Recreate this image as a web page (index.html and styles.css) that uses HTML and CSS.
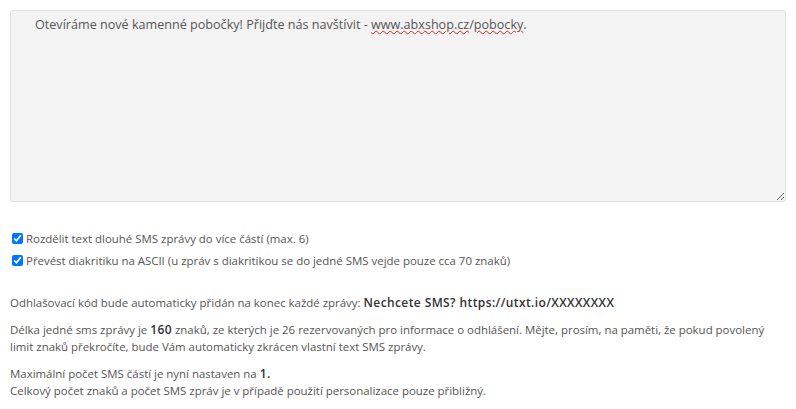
FILE: index.html
```html
<!DOCTYPE html>
<html lang="cs">
<head>
<meta charset="utf-8">
<link rel="stylesheet" href="styles.css">
</head>
<body>
<div class="editor" spellcheck="false">Otevíráme nové kamenné pobočky! Přijďte nás navštívit - <span class="typo">www.abxshop.cz</span>/<span class="typo">pobocky</span>.</div>
<div class="options">
  <label class="opt"><input type="checkbox" checked> Rozdělit text dlouhé SMS zprávy do více částí (max. 6)</label>
  <label class="opt"><input type="checkbox" checked> Převést diakritiku na ASCII (u zpráv s diakritikou se do jedné SMS vejde pouze cca 70 znaků)</label>
</div>
<div class="info">
  <p>Odhlašovací kód bude automaticky přidán na konec každé zprávy: <b>Nechcete SMS? https://utxt.io/XXXXXXXX</b></p>
  <p>Délka jedné sms zprávy je <b>160</b> znaků, ze kterých je 26 rezervovaných pro informace o odhlášení. Mějte, prosím, na paměti, že pokud povolený limit znaků překročíte, bude Vám automaticky zkrácen vlastní text SMS zprávy.</p>
  <p>Maximální počet SMS částí je nyní nastaven na <b>1.</b><br>Celkový počet znaků a počet SMS zpráv je v případě použití personalizace pouze přibližný.</p>
</div>
</body>
</html>
```
FILE: styles.css
```css
html, body {
  margin: 0;
  background: #fff;
}
body {
  padding: 10px;
  font-family: "Open Sans", "Noto Sans", sans-serif;
  font-size: 11.45px;
  line-height: 17px;
  color: #555;
}
.editor {
  box-sizing: border-box;
  height: 192px;
  background: #f3f3f3;
  border: 1px solid #e2e2e2;
  border-radius: 3px;
  padding: 5px 24px;
  font-size: 12.6px;
  line-height: 18px;
  color: #555;
  resize: vertical;
  overflow: auto;
}
.typo {
  text-decoration: underline wavy #e02020;
  text-decoration-thickness: 1px;
  text-underline-offset: 1px;
}
.options {
  margin-top: 28px;
  display: flex;
  flex-direction: column;
  gap: 5px;
}
.opt {
  display: flex;
  align-items: center;
  height: 17px;
}
.opt input {
  margin: 0 3px 0 2px;
  width: 11px;
  height: 11px;
}
.info {
  margin-top: 25px;
}
.info p {
  margin: 0 0 10px;
}
.info b {
  font-size: 12px;
  font-weight: 600;
  letter-spacing: 0.4px;
  color: #333;
}
```
